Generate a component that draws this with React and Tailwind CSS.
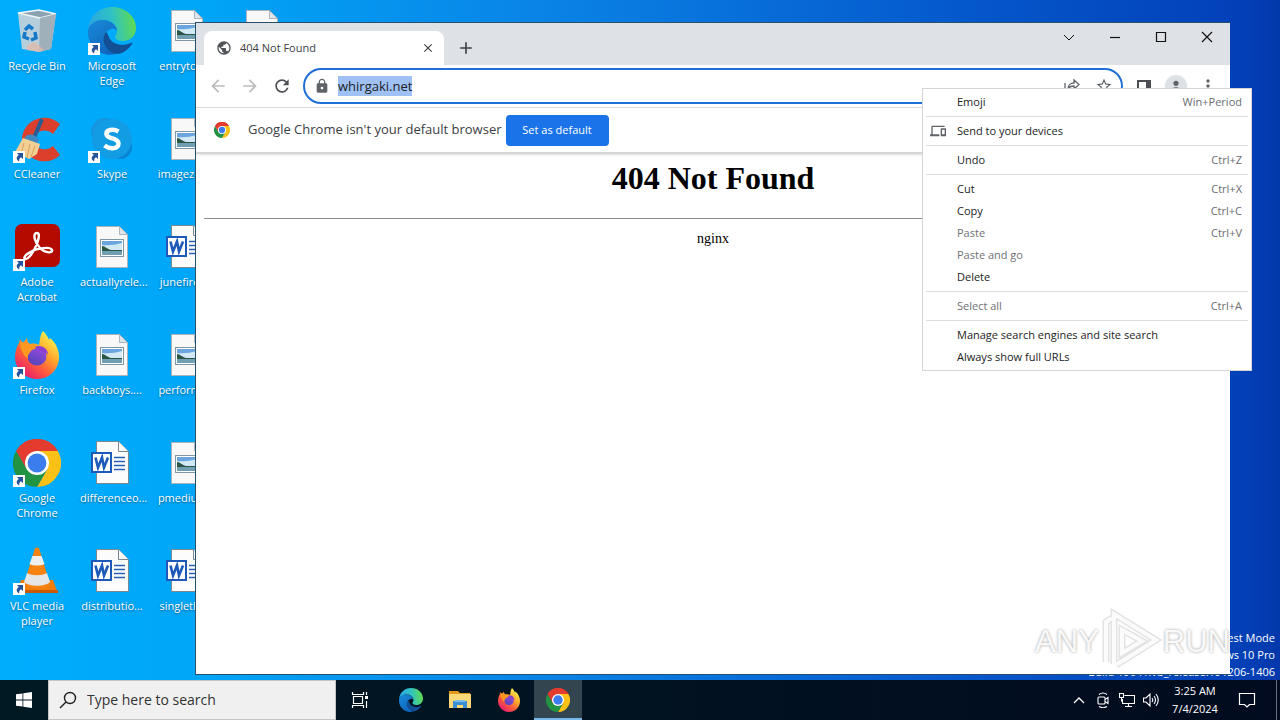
import React, { useEffect, useRef } from "react";
import {
  MdPublic, MdArrowBack, MdArrowForward, MdRefresh, MdLock, MdStarBorder,
  MdMoreVert, MdDevices, MdClose, MdAdd, MdPerson,
} from "react-icons/md";

function ChromeLogo({ className }) {
  return (
    <svg viewBox="0 0 48 48" className={className} aria-hidden="true">
      <path d="M24 24 3.2 12A24 24 0 0 1 44.8 12z" fill="#e33b2e" />
      <path d="M24 12H44.8A24 24 0 0 1 24 48L34.4 30z" fill="#fbc116" />
      <path d="M3.2 12 13.6 30 24 36 34.4 30 24 48A24 24 0 0 1 3.2 12z" fill="#229342" />
      <path d="M24 12H44.8A24 24 0 0 0 3.2 12L13.6 30z" fill="#e33b2e" />
      <circle cx="24" cy="24" r="12" fill="#fff" />
      <circle cx="24" cy="24" r="9.4" fill="#3b7ded" />
    </svg>
  );
}

function EdgeLogo({ className, id }) {
  return (
    <svg viewBox="0 0 48 48" className={className} aria-hidden="true">
      <defs>
        <linearGradient id={id + "a"} x1="0" y1=".4" x2="1" y2=".3">
          <stop offset="0" stopColor="#29a5e3" />
          <stop offset=".5" stopColor="#2fc2c4" />
          <stop offset="1" stopColor="#63dc4b" />
        </linearGradient>
        <linearGradient id={id + "b"} x1="0" y1="0" x2=".6" y2="1">
          <stop offset="0" stopColor="#1a8ad8" />
          <stop offset="1" stopColor="#1067bd" />
        </linearGradient>
      </defs>
      <path d="M0 23C1 9 11 0 24 0c14 0 24 10 24 21 0 8-6 13-13 13-5 0-8-2-8-4 0-1 2-3 2-6 0-6-6-11-13-11C8 13 2 17 0 23z" fill={"url(#" + id + "a)"} />
      <path d="M0 24C1 17 7 13 15 13c7 0 14 5 14 11-1-2-4-3-6-2-6 2-8 8-6 14 2 5 6 9 11 11-15 4-29-8-28-23z" fill={"url(#" + id + "b)"} />
      <path d="M18 25c-3 4-3 9-1 13 3 6 8 9 13 9 6-1 11-5 14-10 1-1 0-2-1-1-9 4-20 1-22-6-1-2-1-3-3-5z" fill="#124f94" />
    </svg>
  );
}

function FirefoxLogo({ className, id }) {
  return (
    <svg viewBox="0 0 48 48" className={className} aria-hidden="true">
      <defs>
        <linearGradient id={id + "a"} x1=".85" y1=".1" x2=".2" y2=".95">
          <stop offset="0" stopColor="#fff44f" />
          <stop offset=".35" stopColor="#ffa82c" />
          <stop offset=".65" stopColor="#ff5a3c" />
          <stop offset="1" stopColor="#e51b72" />
        </linearGradient>
        <linearGradient id={id + "b"} x1=".8" y1="0" x2=".3" y2="1">
          <stop offset="0" stopColor="#a148e0" />
          <stop offset="1" stopColor="#5045b8" />
        </linearGradient>
      </defs>
      <path d="M30 0c3 3 5 6 6 9l1-2c6 5 9 12 9 19 0 13-10 22-22 22S2 38 2 26c0-6 2-11 4-14l1-4 3 4 4-5c0 3 1 5 3 6 4-1 7 0 9 1 1-5 1-10 4-14z" fill={"url(#" + id + "a)"} />
      <circle cx="24" cy="25" r="9.5" fill={"url(#" + id + "b)"} />
      <path d="M7 11c4 0 7 1 10 2l7 2c0 3-4 3-6 5-2 3-4 4-3 8-4-3-8-9-8-17z" fill="#ff9820" />
      <path d="M22 16c6-3 13 1 13 8-2-3-5-4-8-4z" fill="#8a3fd0" />
    </svg>
  );
}

function ShortcutArrow() {
  return (
    <svg viewBox="0 0 12 12" className="absolute bottom-0 left-0 size-3" aria-hidden="true">
      <rect width="12" height="12" fill="#fdfdfd" />
      <path d="M4 2h6v6L8 6.3C6.500 7.200 6 8.500 6.300 10.500 3 9 3 5.500 5.800 4z" fill="#25549c" />
    </svg>
  );
}

function ImageFile() {
  return (
    <svg viewBox="0 0 48 48" className="size-12" aria-hidden="true">
      <path d="M8.500 3.500h23l8 8v33h-31z" fill="#f8f8f8" stroke="#a9b4bd" />
      <path d="M31.500 3.500v8h8z" fill="#dfe5ea" stroke="#a9b4bd" />
      <rect x="12.500" y="16.500" width="23" height="17" fill="#fff" stroke="#7f97a5" />
      <rect x="14" y="18" width="20" height="14" fill="#6aa5de" />
      <path d="M14 22q10 1 20-2v7H14z" fill="#d3e8f5" />
      <path d="M14 23c3 0 5 3 9 4h11v1H14z" fill="#2b5545" />
      <rect x="14" y="28" width="20" height="4" fill="#6f9fb0" />
    </svg>
  );
}

function WordFile() {
  return (
    <svg viewBox="0 0 48 48" className="size-12" aria-hidden="true">
      <path d="M8.500 2.500h22l10 10v32h-32z" fill="#fcfcfc" stroke="#7b8791" />
      <path d="M30.500 2.500v10h10" fill="#fff" stroke="#7b8791" />
      <path d="M26 18.500h11M26 22.500h11M26 26.500h11M26 30.500h11" stroke="#2b5fb4" strokeWidth="1.300" />
      <rect x="3" y="13" width="21" height="21" fill="#1c59b8" />
      <rect x="5" y="15" width="17" height="17" fill="#fff" />
      <path d="M7.500 18.500 10 28.500 14 18.500 16 28.500 20 18.500" fill="none" stroke="#1c59b8" strokeWidth="2.600" />
    </svg>
  );
}

function RecycleBin() {
  return (
    <svg viewBox="0 0 48 48" className="size-12" aria-hidden="true">
      <path d="M5 6 26 3l17 4-5 35-12 3-17-3z" fill="#c9d3d9" opacity=".9" />
      <path d="M5 6 26 3l17 4-16 4z" fill="#8ba3b1" stroke="#f1f5f7" strokeWidth="1.500" />
      <path d="M27 11 43 7l-5 35-12 3z" fill="#9fb0bb" />
      <path d="m14 38 8-3 9 8-5 2-12-2z" fill="#e7b7a4" opacity=".7" />
      <path d="m12 23 4-4 4 3M22 25l1 6-5 2M16 32l-5-2 1-5" fill="none" stroke="#1679c8" strokeWidth="3.500" />
    </svg>
  );
}

function CCleaner() {
  return (
    <svg viewBox="0 0 48 48" className="size-12" aria-hidden="true">
      <path d="M47 9 40 19c-7-7-19-3-19 6 0 8 11 13 19 6l7 9C34 53 9 45 9 25 9 6 32-5 47 9z" fill="#dc3f2b" />
      <path d="M29 4 21 23" stroke="#285c93" strokeWidth="4" />
      <path d="M12 22c4-4 10-3 14 3l-3 4-12-3z" fill="#4088c0" />
      <path d="m10 23 17 6-3 10-8 5-14-7z" fill="#f4cf94" />
      <path d="m11 28-3 11M17 29l-3 14M22 31l-4 11" stroke="#d5a45d" />
    </svg>
  );
}

function Skype() {
  return (
    <svg viewBox="0 0 48 48" className="size-12" aria-hidden="true">
      <circle cx="17" cy="17" r="14" fill="#1596de" />
      <circle cx="32" cy="32" r="12" fill="#0a83d4" />
      <circle cx="24" cy="24" r="20" fill="#119ce4" />
      <path d="M30.500 16.500c-5-3-13-2-12 3 1 5 12 3 12 9 0 6-9 6-14 2" fill="none" stroke="#fff" strokeWidth="4.500" />
    </svg>
  );
}

function Acrobat() {
  return (
    <svg viewBox="0 0 48 48" className="size-12" aria-hidden="true">
      <rect x="2" y="1" width="45" height="43" rx="7" fill="#b30b00" />
      <path d="M24 10c-5 0-2 10 3 15 6 6 13 5 12 2-2-4-18-2-26 5-4 4 0 6 4 1 6-7 12-23 7-23z" fill="none" stroke="#fff" strokeWidth="2.400" />
    </svg>
  );
}

function Vlc() {
  return (
    <svg viewBox="0 0 48 48" className="size-12" aria-hidden="true">
      <path d="M8 33h32l4 11H4z" fill="#f07d0c" />
      <path d="M3 43h42v3H3z" fill="#c95a04" />
      <path d="M22 1q2-1 4 0l11 36c-4 6-22 6-26 0z" fill="#f58211" />
      <path d="m19.500 9h9l3 8c-4 2-11 2-15 0z" fill="#efefef" />
      <path d="m14 26c5 3 15 3 20 0l3 9c-5 5-21 5-26 0z" fill="#e6e6e6" />
    </svg>
  );
}

const shortcuts = [
  ["Recycle Bin", <RecycleBin />, false],
  ["CCleaner", <CCleaner />, true],
  ["Adobe Acrobat", <Acrobat />, true],
  ["Firefox", <FirefoxLogo className="size-12" id="dff" />, true],
  ["Google Chrome", <ChromeLogo className="size-12" />, true],
  ["VLC media player", <Vlc />, true],
  ["Microsoft Edge", <EdgeLogo className="size-12" id="ded" />, true],
  ["Skype", <Skype />, true],
  ["actuallyrele...", <ImageFile />, false],
  ["backboys....", <ImageFile />, false],
  ["differenceo...", <WordFile />, false],
  ["distributio...", <WordFile />, false],
  ["entrytool...", <ImageFile />, false],
  ["imagezon...", <ImageFile />, false],
  ["junefire.rtf", <WordFile />, false],
  ["performe...", <ImageFile />, false],
  ["pmedium...", <ImageFile />, false],
  ["singlethe...", <WordFile />, false],
  ["", <ImageFile />, false],
];

function Desktop() {
  return (
    <div className="grid w-max auto-cols-[74px] grid-flow-col grid-rows-[repeat(6,108px)] gap-x-px pt-[7px]">
      {shortcuts.map(([name, icon, linked], i) => (
        <button key={i} type="button" aria-label={name || "Image file"} className="flex flex-col items-center justify-start gap-[3px]">
          <span className="relative block size-12">
            {icon}
            {linked && <ShortcutArrow />}
          </span>
          <span className="w-16 text-center text-[11px] leading-[15px] whitespace-normal text-white [text-shadow:0_1px_2px_#0007]">{name}</span>
        </button>
      ))}
    </div>
  );
}

function CaptionButton({ label, children }) {
  return (
    <button type="button" aria-label={label} className="flex h-7 w-[46px] items-center justify-center">
      <svg viewBox="0 0 12 12" className="size-3" fill="none" stroke="#111" strokeWidth="1.200" aria-hidden="true">{children}</svg>
    </button>
  );
}

function Browser() {
  const address = useRef(null);
  useEffect(() => {
    address.current.focus();
    address.current.select();
  }, []);
  return (
    <section className="absolute top-[22px] right-[50px] bottom-[5px] left-[195px] flex flex-col border border-r-0 border-[#27506d] bg-white">
      <div className="flex h-[42px] shrink-0 bg-[#dee1e6] pl-2">
        <div className="mt-2 flex w-60 items-center rounded-t-lg bg-white pr-2 pl-3 text-[11px] text-[#3c4043]">
          <MdPublic className="size-4 text-[#505357]" />
          <span className="flex-1 pl-2">404 Not Found</span>
          <button type="button" aria-label="Close tab" className="flex size-4 items-center justify-center">
            <MdClose className="size-3.5 text-[#3c4043]" />
          </button>
        </div>
        <button type="button" aria-label="New tab" className="mt-2 ml-2 flex size-7 items-center justify-center self-center">
          <MdAdd className="size-5 text-[#3c4043]" />
        </button>
        <div className="ml-auto flex">
          <CaptionButton label="Search tabs"><path d="m1 4 5 5 5-5" strokeWidth="1" /></CaptionButton>
          <CaptionButton label="Minimize"><path d="M1 6.500h10" /></CaptionButton>
          <CaptionButton label="Maximize"><path d="M1.500 1.500h9v9h-9z" /></CaptionButton>
          <CaptionButton label="Close"><path d="m1 1 10 10M11 1 1 11" /></CaptionButton>
        </div>
      </div>
      <div className="flex h-[43px] shrink-0 items-center border-b border-[#dadce0] px-1.5 text-[#5f6368]">
        <button type="button" aria-label="Back" className="flex w-8 justify-center text-[#babcbe]"><MdArrowBack className="size-5" /></button>
        <button type="button" aria-label="Forward" className="flex w-8 justify-center text-[#babcbe]"><MdArrowForward className="size-5" /></button>
        <button type="button" aria-label="Reload" className="flex w-8 justify-center"><MdRefresh className="size-5 text-[#4b4e52]" /></button>
        <div className="ml-[5px] flex h-9 flex-1 items-center rounded-full border-2 border-[#1f6fd6] pr-px pl-[9px]">
          <MdLock className="size-4 shrink-0" />
          <input
            ref={address}
            aria-label="Address"
            defaultValue="whirgaki.net"
            className="h-5 min-w-0 flex-1 pl-2 text-[13px] leading-5 text-[#202124] caret-transparent outline-none selection:bg-[#9fc1f5] selection:text-[#202124]"
          />
          <button type="button" aria-label="Share" className="flex w-8 justify-center">
            <svg viewBox="0 0 16 16" className="size-4" fill="none" stroke="currentColor" strokeWidth="1.300" aria-hidden="true">
              <path d="M1 5v9h12v-2M4 11c0-4 3-6 6-6V2l5 4.500L10 11V8C7 8 5 9 4 11z" />
            </svg>
          </button>
          <button type="button" aria-label="Bookmark" className="flex w-8 justify-center"><MdStarBorder className="size-[18px]" /></button>
        </div>
        <button type="button" aria-label="Side panel" className="ml-[5px] flex w-8 justify-center">
          <svg viewBox="0 0 16 16" className="size-4" aria-hidden="true"><path d="M1 2h14v12H1zM3 4v8h7V4z" fill="#4b4e52" fillRule="evenodd" /></svg>
        </button>
        <button type="button" aria-label="Profile" className="flex w-8 justify-center">
          <span className="flex size-[22px] items-center justify-center rounded-full bg-[#dee1e6]"><MdPerson className="size-4" /></span>
        </button>
        <button type="button" aria-label="Menu" className="flex w-8 justify-center"><MdMoreVert className="size-5" /></button>
      </div>
      <div className="flex h-[46px] shrink-0 items-center border-b-2 border-[#d5d6d8] pl-[18px] shadow-[0_1px_2px_#0002]">
        <ChromeLogo className="size-4" />
        <span className="pl-[18px] text-[13px] text-[#3c4043]">Google Chrome isn't your default browser</span>
        <button type="button" className="ml-1 h-[31px] w-[103px] rounded bg-[#1a73e8] text-[11px] text-white">Set as default</button>
      </div>
      <main className="flex-1 px-2 text-center font-['Liberation_Serif',serif] text-black">
        <h1 className="pt-1.5 text-[32px] leading-9 font-bold">404 Not Found</h1>
        <hr className="mt-[22px] border-t border-[#8c8c8c]" />
        <p className="pt-2.5 text-[14px] leading-5">nginx</p>
      </main>
    </section>
  );
}

const menuGroups = [
  [["Emoji", "Win+Period"]],
  [["Send to your devices"]],
  [["Undo", "Ctrl+Z"]],
  [["Cut", "Ctrl+X"], ["Copy", "Ctrl+C"], ["Paste", "Ctrl+V", true], ["Paste and go", "", true], ["Delete"]],
  [["Select all", "Ctrl+A", true]],
  [["Manage search engines and site search"], ["Always show full URLs"]],
];

function ContextMenu() {
  return (
    <div role="menu" className="absolute top-[88px] right-[28px] w-[330px] border border-[#d3d5d8] bg-white px-[3px] py-0.5 text-[11px] text-[#1b1c1e]">
      {menuGroups.map((group, g) => (
        <div key={g} role="group" className={g ? "mt-[3px] border-t border-[#dadce0] pt-[3px]" : ""}>
          {group.map(([label, keys, off]) => (
            <button key={label} type="button" role="menuitem" disabled={off} className="flex h-[22px] w-full items-center pr-1.5 pl-1 text-left disabled:text-[#6e7174]">
              <span className="w-[27px]">{label === "Send to your devices" && <MdDevices className="size-4 text-[#5f6368]" />}</span>
              <span className="flex-1 whitespace-nowrap">{label}</span>
              <span className="text-[#6a6d70]">{keys}</span>
            </button>
          ))}
        </div>
      ))}
    </div>
  );
}

function Watermark() {
  return (
    <div className="pointer-events-none absolute right-[50px] bottom-1.5 flex items-center gap-[3px] font-['Liberation_Sans',sans-serif] text-[31px] leading-[60px] text-white/90 [text-shadow:0_0_3px_#0006]">
      <span>ANY</span>
      <svg viewBox="0 0 58 64" className="h-16 w-[58px] overflow-visible" fill="none" aria-hidden="true">
        <path d="M4 52V12l6-4M12 54V4l42 26-40 25M20 43V20l20 11z" stroke="#0000001c" strokeWidth="7" />
        <path d="M4 52V12l6-4M12 54V4l42 26-40 25M20 43V20l20 11z" stroke="#fff" strokeOpacity=".85" strokeWidth="4" />
      </svg>
      <span>RUN</span>
    </div>
  );
}

function Explorer() {
  return (
    <svg viewBox="0 0 24 24" className="size-6" aria-hidden="true">
      <path d="M1 3h9l2 2h10v4H1z" fill="#e19a19" />
      <path d="M1 6h22v14H1z" fill="#fbd978" />
      <path d="M5 20v-7h14v7h-4v-3H9v3z" fill="#3b90d4" />
      <path d="M7 12h10v2H7z" fill="#79bdea" />
    </svg>
  );
}

function Taskbar() {
  return (
    <footer className="flex h-10 shrink-0 bg-linear-to-r from-[#001923] to-[#020b1f] text-white">
      <button type="button" aria-label="Start" className="flex w-12 items-center justify-center">
        <svg viewBox="0 0 16 16" className="size-4" fill="#fff" aria-hidden="true">
          <path d="M0 2.300 6.500 1.400v6.200H0zM7.300 1.300 16 0v7.600H7.300zM0 8.400h6.500v6.200L0 13.700zM7.300 8.400H16V16l-8.700-1.300z" />
        </svg>
      </button>
      <label className="flex w-72 items-center border border-[#c4c4c4] bg-[#f0f0f0] pl-2.5">
        <svg viewBox="0 0 18 18" className="size-[18px]" fill="none" stroke="#222" strokeWidth="1.400" aria-hidden="true">
          <circle cx="11" cy="7" r="5.500" /><path d="m7 11-6 6" />
        </svg>
        <input aria-label="Search" placeholder="Type here to search" className="min-w-0 flex-1 pl-2.5 text-sm outline-none placeholder:text-[#333]" />
      </label>
      <button type="button" aria-label="Task view" className="flex w-12 items-center justify-center">
        <svg viewBox="0 0 18 18" className="size-[18px]" fill="none" stroke="#fff" strokeWidth="1.200" aria-hidden="true">
          <path d="M2.500 5.500h9v7h-9zM1.500 1v2.500h11V1M1.500 17v-2.500h11V17M15.500 1v3M15.500 10v7" />
          <path d="M14 5h3v3h-3z" fill="#fff" stroke="none" />
        </svg>
      </button>
      <div className="ml-[3px] flex gap-px">
        <button type="button" aria-label="Edge" className="flex w-12 items-center justify-center"><EdgeLogo className="size-6" id="ted" /></button>
        <button type="button" aria-label="File Explorer" className="flex w-12 items-center justify-center"><Explorer /></button>
        <button type="button" aria-label="Firefox" className="flex w-12 items-center justify-center"><FirefoxLogo className="size-6" id="tff" /></button>
        <button type="button" aria-label="Chrome" className="flex w-12 items-center justify-center border-b-2 border-[#76b9ed] bg-[#33464f] pt-0.5"><ChromeLogo className="size-6" /></button>
      </div>
      <div className="ml-auto flex items-center">
        <button type="button" aria-label="Hidden icons" className="flex w-6 justify-center">
          <svg viewBox="0 0 12 12" className="size-3" fill="none" stroke="#fff" strokeWidth="1.300" aria-hidden="true"><path d="m1 9 5-5 5 5" /></svg>
        </button>
        <button type="button" aria-label="Meet now" className="flex w-6 justify-center">
          <svg viewBox="0 0 16 16" className="size-4" fill="none" stroke="#fff" strokeWidth="1.100" aria-hidden="true">
            <rect x="3" y="5" width="7" height="7" rx="1" /><path d="m10 7.500 3-2v6l-3-2M4 2.500q4-3 8 0M4 14.500q4 2.500 8 0" />
          </svg>
        </button>
        <button type="button" aria-label="Network" className="flex w-6 justify-center">
          <svg viewBox="0 0 16 16" className="size-4" fill="none" stroke="#fff" strokeWidth="1.100" aria-hidden="true">
            <path d="M5.500 3.500h10v8H3.500V7M.5 1.500h4v4h-4zM9.500 11.500v3M6 14.500h7M2.500 5.500v4" />
          </svg>
        </button>
        <button type="button" aria-label="Volume" className="flex w-6 justify-center">
          <svg viewBox="0 0 16 16" className="size-4" fill="none" stroke="#fff" strokeWidth="1.100" aria-hidden="true">
            <path d="M.5 6h2.500l4-4v12l-4-4H.5zM9 6q1.500 2 0 4M11 4q3 4 0 8M13 2q4.500 6 0 12" />
          </svg>
        </button>
        <time className="w-16 text-center text-[11px] leading-[18px]">3:25 AM<br />7/4/2024</time>
        <button type="button" aria-label="Notifications" className="flex w-10 justify-center">
          <svg viewBox="0 0 18 18" className="size-[18px]" fill="none" stroke="#fff" strokeWidth="1.200" aria-hidden="true"><path d="M1.500 2.500h15v11h-5L9 16l-2.500-2.500h-5z" /></svg>
        </button>
        <span className="ml-[9px] h-10 w-1 border-l border-[#65707c]" />
      </div>
    </footer>
  );
}

export default function App() {
  return (
    <div className="flex min-h-screen flex-col overflow-hidden font-['Open_Sans','Noto_Sans',sans-serif]">
      <div className="relative flex-1 bg-[linear-gradient(to_right,#00adfd_0%,#00a6f8_15%,#0a84e6_42%,#0558cc_75%,#0340b8_97%,#0238aa_100%)]">
        <Desktop />
        <div className="absolute right-[5px] bottom-0 text-right text-[11px] leading-[17px] text-white">
          <p>Test Mode</p>
          <p>Windows 10 Pro</p>
          <p>Build 19041.vb_release.191206-1406</p>
        </div>
        <Browser />
        <Watermark />
        <ContextMenu />
      </div>
      <Taskbar />
    </div>
  );
}
